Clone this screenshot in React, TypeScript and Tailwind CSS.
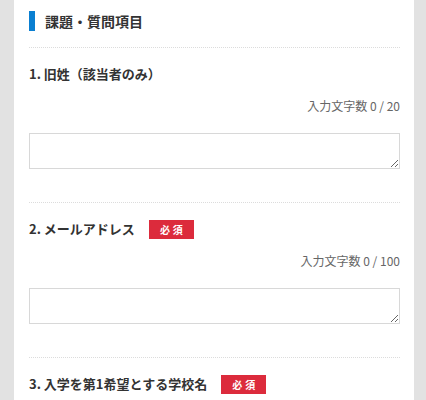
const font = { fontFamily: '"Noto Sans CJK JP", "Noto Sans", sans-serif' };

type Question = {
    no: number;
    label: string;
    required: boolean;
    max?: number;
};

const questions: Question[] = [
    { no: 1, label: "旧姓（該当者のみ）", required: false, max: 20 },
    { no: 2, label: "メールアドレス", required: true, max: 100 },
    { no: 3, label: "入学を第1希望とする学校名", required: true },
];

function RequiredBadge() {
    return (
        <span className="ml-[14px] inline-flex h-[19px] w-[45px] items-center justify-center bg-[#dc2b3c] text-[10px] font-bold tracking-[3px] text-white pl-[3px]">
            必須
        </span>
    );
}

function QuestionBlock({ q }: { q: Question }) {
    return (
        <section className="border-t border-dotted border-[#dcdcdc] pt-4 pb-[33px]">
            <div className="flex h-5 items-center">
                <span className="text-[13px] font-bold leading-5 text-[#333]">
                    {q.no}. {q.label}
                </span>
                {q.required && <RequiredBadge />}
            </div>
            {q.max !== undefined && (
                <>
                    <p className="mt-[13px] text-right text-[12px] leading-[18px] text-[#666]">
                        入力文字数 0 / {q.max}
                    </p>
                    <textarea
                        className="mt-[18px] block h-[36px] w-full border border-[#d8d8d8] bg-white outline-none"
                        aria-label={q.label}
                    />
                </>
            )}
        </section>
    );
}

export default function App() {
    return (
        <div className="min-h-[400px] bg-[#e2e2e2] pl-[14px] pr-[12px]" style={font}>
            <main className="min-h-[400px] bg-white pl-[15px] pr-[14px]">
                {/* Header */}
                <header className="flex items-center pt-[11px] pb-4">
                    <span className="h-5 w-[6px] bg-[#0a7fd1]" />
                    <h2 className="ml-[10px] text-[14px] font-bold leading-5 text-[#333]">課題・質問項目</h2>
                </header>

                {questions.map((q) => (
                    <QuestionBlock key={q.no} q={q} />
                ))}
            </main>
        </div>
    );
}
